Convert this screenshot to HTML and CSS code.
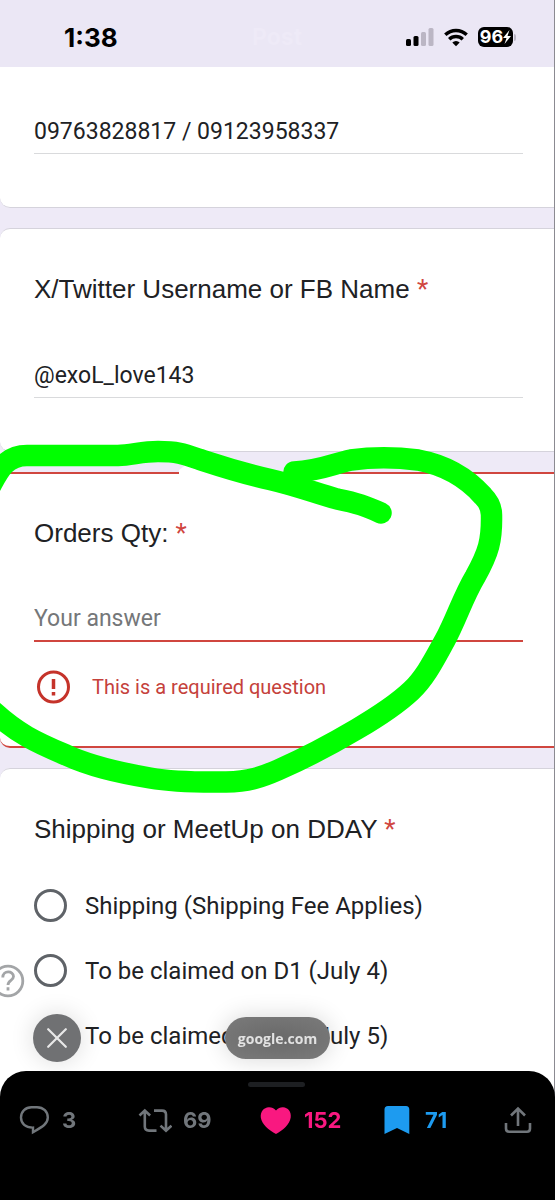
FILE: index.html
```html
<!DOCTYPE html>
<html lang="en">
<head>
<meta charset="utf-8">
<meta name="viewport" content="width=device-width, initial-scale=1">
<title>Order form</title>
<link rel="stylesheet" href="styles.css">
</head>
<body>
<div class="page">
  <header class="status">
    <span class="status-time">1:38</span>
    <span class="status-title">Post</span>
    <div class="status-icons">
      <svg class="signal" width="28" height="19" viewBox="0 0 28 19" aria-hidden="true">
        <rect x="0" y="11" width="5" height="7" rx="1.5" fill="#000"/>
        <rect x="7.5" y="8" width="5" height="10" rx="1.5" fill="#000"/>
        <rect x="15" y="4" width="5" height="14" rx="1.5" fill="#bbb6c4"/>
        <rect x="22.500" y="0" width="5" height="18" rx="1.5" fill="#bbb6c4"/>
      </svg>
      <svg width="24" height="19" viewBox="0 0 24 19" fill="none" stroke="#000" stroke-width="3.400" aria-hidden="true">
        <path d="M1.300 6.800a15.500 15.500 0 0 1 21.400 0"/>
        <path d="M5.200 11.200a9.800 9.800 0 0 1 13.600 0"/>
        <path d="M12 18.300l-3.700-3.800a5.300 5.300 0 0 1 7.400 0z" fill="#000" stroke="none"/>
      </svg>
      <span class="battery"><span class="battery-body">96<svg width="8" height="14" viewBox="0 0 8 14" aria-hidden="true"><path d="M6.500 0L0 8h3.500L1.500 14 8 6H4.500z" fill="#fff"/></svg></span><span class="battery-nub"></span></span>
    </div>
  </header>

  <form class="form">
    <section class="card card-first">
      <input class="field" type="text" aria-label="Contact number" value="09763828817 / 09123958337">
    </section>

    <section class="card">
      <label class="question" for="username">X/Twitter Username or FB Name <span class="star">*</span></label>
      <input class="field" id="username" type="text" value="@exoL_love143">
    </section>

    <section class="card card-error">
      <label class="question" for="qty">Orders Qty: <span class="star">*</span></label>
      <input class="field" id="qty" type="text" placeholder="Your answer" aria-describedby="qty-error">
      <p class="error" id="qty-error">
        <svg width="40" height="40" viewBox="0 0 40 40" aria-hidden="true">
          <circle cx="19.500" cy="20" r="15" fill="none" stroke="#c5332a" stroke-width="3"/>
          <path d="M19.500 12v10M19.500 25v3.500" stroke="#c5332a" stroke-width="3.500"/>
        </svg>
        This is a required question
      </p>
    </section>

    <fieldset class="card card-last" aria-labelledby="delivery">
      <div class="question" id="delivery">Shipping or MeetUp on DDAY <span class="star">*</span></div>
      <div class="options">
        <label class="option"><input class="radio" type="radio" name="delivery">Shipping (Shipping Fee Applies)</label>
        <label class="option"><input class="radio" type="radio" name="delivery">To be claimed on D1 (July 4)</label>
        <label class="option"><input class="radio" type="radio" name="delivery">To be claimed on D2 (July 5)</label>
      </div>
    </fieldset>
  </form>

  <svg class="marker" viewBox="0 430 555 380" aria-hidden="true">
    <path d="M179 475V470L187 464L215 470V475Z" fill="#fff"/>
    <g fill="none" stroke="#00ff00" stroke-width="21.500" stroke-linecap="round" stroke-linejoin="round">
      <path d="M-10 487C-2 472 5 455.500 27 455.500H118C132 455 142 451.500 158 451.500C178 451.500 184 454 200 459.500C220 466 237 472 270 479.500C298 486 315 493 337 499C357 503 366 506 381 513"/>
      <path d="M294 472C320 471 332 464 351 460C372 457 395 457 418 460C445 465 467 478 483 496C490 503 491.500 509 491.500 515C492 540 489 552 475 577C463 597 456 620 445 640C434 660 425 678 411 691C395 706 374 719 357 729C330 745 303 759 278 770C262 777 250 781.500 226 782C190 782.500 167 781 150 778C115 772 90 766 66 755C35 742 17 733 -6 712"/>
    </g>
  </svg>
</div>

<div class="dock">
  <button class="help" type="button" aria-label="Help">
    <svg width="34" height="34" viewBox="0 0 34 34" fill="none" stroke="#a3a5a7" stroke-width="2.800" aria-hidden="true">
      <circle cx="17" cy="17" r="14.800"/>
      <path d="M11.800 13.500C11.800 6 22.500 6.500 22.500 12.500C22.500 16.500 17 16.200 17 21M17 23.300V26.500"/>
    </svg>
  </button>
  <div class="browser">
    <button class="close" type="button" aria-label="Close">
      <svg width="20" height="20" viewBox="0 0 20 20" fill="none" stroke="#e8e8e8" stroke-width="2.200" stroke-linecap="round" aria-hidden="true"><path d="M1.200 1.200L18.800 18.800M18.800 1.200L1.200 18.800"/></svg>
    </button>
    <button class="site" type="button">google.com</button>
  </div>
  <footer class="sheet">
    <div class="handle"></div>
    <div class="actions">
      <button class="action" type="button" aria-label="Reply, 3">
        <svg width="34" height="34" viewBox="0 0 34 34" fill="none" stroke="#71767b" stroke-width="2.400" stroke-linejoin="miter" aria-hidden="true"><path d="M14.500 4.200H20C26.500 4.200 30.800 8.800 30.800 14.500C30.800 21 25 24 16 29.200V24.600C8.500 24.800 4 20.500 4 14.500C4 8.500 8.500 4.200 14.500 4.200Z"/></svg>
        <span>3</span>
      </button>
      <button class="action" type="button" aria-label="Repost, 69">
        <svg width="34" height="34" viewBox="0 0 34 34" fill="none" stroke="#71767b" stroke-width="2.600" stroke-linejoin="miter" aria-hidden="true"><path d="M1.500 12.500L6.800 7.500L12.100 12.500M6.800 8.500V23.500Q6.800 27.600 11 27.600H18.500M16 7.600H24Q28 7.600 28 11.600V27M22.500 22.600L28 27.800L33.500 22.600"/></svg>
        <span>69</span>
      </button>
      <button class="action liked" type="button" aria-label="Like, 152">
        <svg width="34" height="34" viewBox="0 0 34 34" fill="#f91880" aria-hidden="true"><path d="M17 7.500C19.200 5 21.500 4.200 24 4.300C29 4.500 32.500 9 31.700 14.500C30.700 21.500 24 27.300 17 31C10 27.300 2.800 21.500 1.800 14.500C1.200 9 4.800 4.500 9.800 4.300C12.500 4.200 14.800 5 17 7.500Z"/></svg>
        <span>152</span>
      </button>
      <button class="action saved" type="button" aria-label="Bookmark, 71">
        <svg width="34" height="34" viewBox="0 0 34 34" fill="#1d9bf0" aria-hidden="true"><path d="M8 3H26Q29.300 3 29.300 6.500V31L17 25L4.500 31V6.500Q4.500 3 8 3Z"/></svg>
        <span>71</span>
      </button>
      <button class="action" type="button" aria-label="Share">
        <svg width="34" height="34" viewBox="0 0 34 34" fill="none" stroke="#71767b" stroke-width="2.600" aria-hidden="true"><path d="M10 12.500L17 5.500L24 12.500M17 6V23M5 20V25.500Q5 28.700 8.200 28.700H26Q29 28.700 29 25.500V20"/></svg>
      </button>
    </div>
  </footer>
</div>
</body>
</html>
```
FILE: styles.css
```css
* {
  box-sizing: border-box;
}

body {
  margin: 0;
  background: #eeeaf7;
  color: #202124;
  font-family: Roboto, sans-serif;
}

button {
  margin: 0;
  padding: 0;
  border: 0;
  background: none;
  font: inherit;
  color: inherit;
}

.page {
  position: relative;
  display: flex;
  flex-direction: column;
  min-height: 100vh;
  border-right: 1px solid #8b8a91;
  overflow: hidden;
}

/* Status bar */
.status {
  display: grid;
  grid-template-columns: 1fr auto 1fr;
  align-items: center;
  height: 67px;
  padding: 7px 38px 0 64px;
  background: #ebe7f5;
  font-family: Inter, sans-serif;
  font-weight: 700;
}

.status-time {
  font-size: 26px;
  color: #000;
}

.status-title {
  margin-right: 26px;
  font-size: 23px;
  color: #eeeaf7;
}

.status-icons {
  display: flex;
  justify-content: flex-end;
  align-items: center;
  gap: 10px;
}

.battery {
  display: flex;
  align-items: center;
  gap: 1px;
}

.battery-body {
  display: flex;
  align-items: center;
  justify-content: center;
  width: 35px;
  height: 20px;
  border-radius: 6px;
  background: #000;
  color: #fff;
  font-size: 18px;
  line-height: 20px;
}

.battery-nub {
  width: 2px;
  height: 7px;
  border-radius: 0 2px 2px 0;
  background: #bbb6c4;
}

/* Form cards */
.form {
  display: flex;
  flex: 1;
  flex-direction: column;
  gap: 20px;
}

.card {
  min-width: 0;
  margin: 0;
  padding: 44px 31px 53px 34px;
  border: 1px solid #d5d3dc;
  border-width: 1px 0;
  border-radius: 10px 0 0 10px;
  background: #fff;
}

.card-first {
  border-top: 0;
  border-top-left-radius: 0;
  padding-top: 48px;
}

.card-error {
  padding: 43px 31px 39px 34px;
  border-width: 2px 0;
  border-color: #d0463f;
}

.card-last {
  flex: 1;
  border-bottom: 0;
  border-bottom-left-radius: 0;
  padding-bottom: 132px;
}

.question {
  display: block;
  font-family: "Liberation Sans", Arial, sans-serif;
  font-size: 26px;
  line-height: 32px;
}

.star {
  color: #d0463f;
  font-family: Roboto, sans-serif;
  line-height: 1;
}

.field {
  display: block;
  width: 100%;
  height: 39px;
  padding: 0 0 6px;
  border: 0;
  border-bottom: 1px solid #d9dadc;
  border-radius: 0;
  outline: 0;
  background: none;
  color: #202124;
  font-family: Roboto, sans-serif;
  font-size: 23px;
}

.question + .field {
  margin-top: 54px;
}

.field::placeholder {
  color: #757779;
  opacity: 1;
}

.card-error .field {
  border-bottom: 2px solid #d0463f;
}

.error {
  display: flex;
  align-items: center;
  gap: 18px;
  margin: 25px 0 0;
  color: #c5413b;
  font-size: 20px;
}

.options {
  margin-top: 28px;
}

.option {
  display: flex;
  align-items: center;
  gap: 18px;
  height: 65px;
  font-size: 24px;
}

.radio {
  appearance: none;
  flex: none;
  width: 33px;
  height: 33px;
  margin: 0;
  border: 3px solid #5f6368;
  border-radius: 50%;
}

/* Hand-drawn highlight over the form */
.marker {
  position: absolute;
  top: 430px;
  left: 0;
  width: calc(100% + 1px);
  pointer-events: none;
}

/* Controls floating over the form */
.dock {
  position: fixed;
  right: 0;
  bottom: 0;
  left: 0;
}

.help {
  position: absolute;
  top: -50px;
  left: -9px;
  height: 34px;
}

.browser {
  display: grid;
  grid-template-columns: 1fr auto 1fr;
  align-items: center;
  padding: 0 33px 9px;
}

.close {
  display: grid;
  place-items: center;
  width: 48px;
  height: 48px;
  border-radius: 50%;
  background: #707173;
  box-shadow: 0 0 24px rgba(0, 0, 0, 0.14);
}

.site {
  height: 42px;
  padding: 0 13px;
  border-radius: 21px;
  background: radial-gradient(#696969, #7b7b7b);
  box-shadow: 0 0 24px rgba(0, 0, 0, 0.16);
  color: #e2e2e2;
  font-family: "Open Sans", sans-serif;
  font-size: 14px;
  font-weight: 700;
}

.sheet {
  padding: 11px 20px 63px 17px;
  border-radius: 26px 26px 0 0;
  background: #000;
}

.handle {
  width: 57px;
  height: 5px;
  margin: 0 auto 16px;
  border-radius: 3px;
  background: #1d1f22;
}

.actions {
  display: grid;
  grid-template-columns: repeat(4, 1fr) auto;
}

.action {
  display: flex;
  align-items: center;
  gap: 11px;
  color: #71767b;
  font-family: Inter, sans-serif;
  font-size: 22px;
  font-weight: 700;
}

.liked {
  color: #f91880;
}

.saved {
  color: #1d9bf0;
}
```
